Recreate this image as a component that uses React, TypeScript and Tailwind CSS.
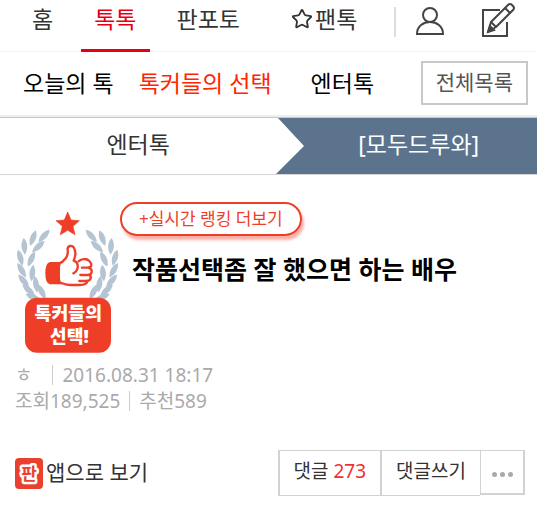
import { Star } from "lucide-react";

const font = "font-['Noto_Sans','Noto_Sans_CJK_KR',sans-serif]";

const leaves = [
  { x: 132, y: 123, r: 42 },
  { x: 99, y: 129, r: 20 },
  { x: 115, y: 155, r: 48 },
  { x: 73, y: 154, r: -4 },
  { x: 94, y: 192, r: 24 },
  { x: 61, y: 188, r: -16 },
  { x: 65, y: 226, r: -30 },
  { x: 97, y: 234, r: 6 },
  { x: 71, y: 258, r: -40 },
  { x: 108, y: 268, r: -8 },
  { x: 86, y: 285, r: -48 },
  { x: 125, y: 290, r: -28 },
  { x: 100, y: 307, r: -66 },
];

function Branch() {
  return (
    <g fill="#b5c4d2">
      {leaves.map((l) => (
        <path
          key={`${l.x}-${l.y}`}
          d="M0-25C12-10 11 10 0 25C-11 10-12-10 0-25Z"
          transform={`translate(${l.x} ${l.y}) rotate(${l.r})`}
        />
      ))}
    </g>
  );
}

function Badge() {
  return (
    <svg viewBox="45 45 315 432" className="h-36 w-[105px] shrink-0" role="img" aria-label="톡커들의 선택">
      <Branch />
      <g transform="translate(406 0) scale(-1 1)">
        <Branch />
      </g>
      <path
        d="M203 51L213 75L238 77L219 94L225 119L203 106L181 119L187 94L168 77L193 75Z"
        fill="#ee3e28"
        stroke="#ee3e28"
        strokeWidth="2"
        strokeLinejoin="round"
      />
      <path
        d="M176 205C190 197 204 182 202 166C202 149 220 149 225 161C231 176 227 188 222 202L240 214L276 216C280 228 278 238 273 245C276 254 270 262 262 263C256 273 246 273 236 273H211C194 273 187 268 172 264Z"
        fill="#fff"
      />
      <path d="M186 201H150Q136 203 136 235Q136 266 150 268H186Q180 262 180 250V220Q180 208 186 201Z" fill="#ee3e28" />
      <g fill="none" stroke="#ee3e28" strokeWidth="7" strokeLinecap="round" strokeLinejoin="round">
        <path d="M176 206C192 200 206 184 203 166C201 150 218 149 223 161C229 174 226 186 221 197C238 203 237 227 220 235" />
        <path d="M236 199C244 190 260 190 268 198C278 208 275 218 265 218H246" />
        <path d="M266 218C280 223 277 240 264 240H241" />
        <path d="M268 240C277 246 271 258 260 258H238" />
        <path d="M262 258C262 270 246 270 238 270H211C196 270 190 265 178 262" />
      </g>
      <rect x="75" y="308" width="258" height="165" rx="36" fill="#ee3e28" />
      <text fill="#fff" fontWeight="900" fontSize="55" textAnchor="middle">
        <tspan x="205" y="376">톡커들의</tspan>
        <tspan x="208" y="443">선택!</tspan>
      </text>
    </svg>
  );
}

function UserIcon() {
  return (
    <svg viewBox="0 0 28 30" className="h-[30px] w-7" fill="none" stroke="#444" strokeWidth="2">
      <circle cx="14" cy="9" r="7" />
      <path d="M1 28C1 12 27 12 27 28Z" />
    </svg>
  );
}

function WriteIcon() {
  return (
    <svg viewBox="0 0 34 36" className="h-9 w-[34px]" fill="none" stroke="#444" strokeWidth="2">
      <path d="M19 8H2V34H26V20" />
      <path d="M7 30L10 20L27 3Q29 1 31 3L32 4Q34 6 32 8L15 25Z" strokeLinejoin="round" />
      <path d="M10 20L15 25M24 6L29 11" />
      <path d="M7 30L9 24L13 28Z" fill="#444" />
    </svg>
  );
}

function AppIcon() {
  return (
    <svg viewBox="0 0 28 31" className="h-[31px] w-7">
      <rect width="28" height="31" rx="4" fill="#e9402f" />
      <text
        x="14"
        y="22"
        textAnchor="middle"
        fontSize="17"
        fontWeight="700"
        fill="#e9402f"
        stroke="#fff"
        strokeWidth="5"
        strokeLinejoin="round"
        paintOrder="stroke"
      >
        판
      </text>
    </svg>
  );
}

export default function App() {
  return (
    <div className={`bg-white text-[#333] ${font}`}>
      <header className="flex h-[52px] border-b border-[#f3f3f3] text-[23px] leading-[38px]">
        <nav className="flex">
          <a href="#home" className="pl-8 pr-7">홈</a>
          <a href="#talk" className="-mb-px border-b-3 border-[#e60012] px-[13px] text-[#e60012]">톡톡</a>
          <a href="#photo" className="px-[27px]">판포토</a>
          <a href="#fan" className="flex gap-0.5 pl-6">
            <Star className="mt-2 size-[22px]" strokeWidth={2} />
            팬톡
          </a>
        </nav>
        <div className="ml-auto flex items-start pr-[22px]">
          <span className="mt-[7px] h-[30px] w-0.5 bg-[#ddd]" />
          <button aria-label="내 정보" className="ml-5 mt-1.5">
            <UserIcon />
          </button>
          <button aria-label="글쓰기" className="ml-[37px] mt-0.5">
            <WriteIcon />
          </button>
        </div>
      </header>

      <nav className="flex h-[63px] items-center pl-[23px] pr-[9px] text-[23px] text-black">
        <a href="#today">오늘의 톡</a>
        <a href="#choice" className="ml-[25px] text-[#ff2600]">톡커들의 선택</a>
        <a href="#enter" className="ml-[39px]">엔터톡</a>
        <button className="mb-0.5 ml-auto h-11 border-2 border-[#c8c8c8] px-[13px] text-[21px] text-[#555]">전체목록</button>
      </nav>

      <div className="grid h-[60px] grid-cols-[53fr_50fr] border-t-2 border-b border-t-[#eee] border-b-[#d5d5da] text-[23px]">
        <a href="#enter" className="flex items-center justify-center border-t border-[#c8c8c8] pb-1">엔터톡</a>
        <a href="#all" className="flex items-center border-t border-[#c8c8c8] bg-[#5c738d] text-white">
          <svg viewBox="0 0 28 56" className="h-14 w-7" fill="#fff">
            <path d="M0 0H2L28 28L0 56Z" />
          </svg>
          <span className="flex-1 pb-1 pr-1 text-center">[모두드루와]</span>
        </a>
      </div>

      <main className="px-[15px] pt-[27px]">
        <div className="flex">
          <div className="pt-2">
            <Badge />
          </div>
          <div>
            <button className="h-[34px] rounded-full border-2 border-[#ee3e28] px-[17px] text-[17px] leading-7 text-[#ee3e28] shadow-[2px_4px_3px_#f9b0a6]">
              +실시간 랭킹 더보기
            </button>
            <h1 className="ml-3 mt-[15px] text-[25px] font-semibold text-black">작품선택좀 잘 했으면 하는 배우</h1>
          </div>
        </div>
        <div className="mt-2 text-[19px] leading-[26px] text-[#aaa]">
          <p className="flex items-center">
            ㅎ<span className="ml-5 mr-[9px] h-5 w-px bg-[#ccc]" />2016.08.31 18:17
          </p>
          <p className="flex items-center">
            조회189,525<span className="mx-[9px] h-5 w-px bg-[#ccc]" />추천589
          </p>
        </div>
        <div className="-mr-[3px] mt-9 flex items-start justify-between">
          <a href="#app" className="mt-2 flex gap-[3px] text-[21px] leading-7">
            <AppIcon />
            앱으로 보기
          </a>
          <div className="flex items-start text-[19px]">
            <button className="h-[46px] border border-l-2 border-[#d2d2d2] px-3.5 pb-1">
              댓글 <span className="text-[#f03030]">273</span>
            </button>
            <button className="h-[46px] border-y border-l border-[#d2d2d2] px-3.5 pb-1">댓글쓰기</button>
            <button
              aria-label="더보기"
              className="flex h-[45px] w-[45px] items-center justify-center gap-[3px] border border-r-2 border-b-2 border-[#d2d2d2] pt-1"
            >
              <span className="size-[5px] rounded-full bg-[#aaa]" />
              <span className="size-[5px] rounded-full bg-[#aaa]" />
              <span className="size-[5px] rounded-full bg-[#aaa]" />
            </button>
          </div>
        </div>
      </main>
    </div>
  );
}
